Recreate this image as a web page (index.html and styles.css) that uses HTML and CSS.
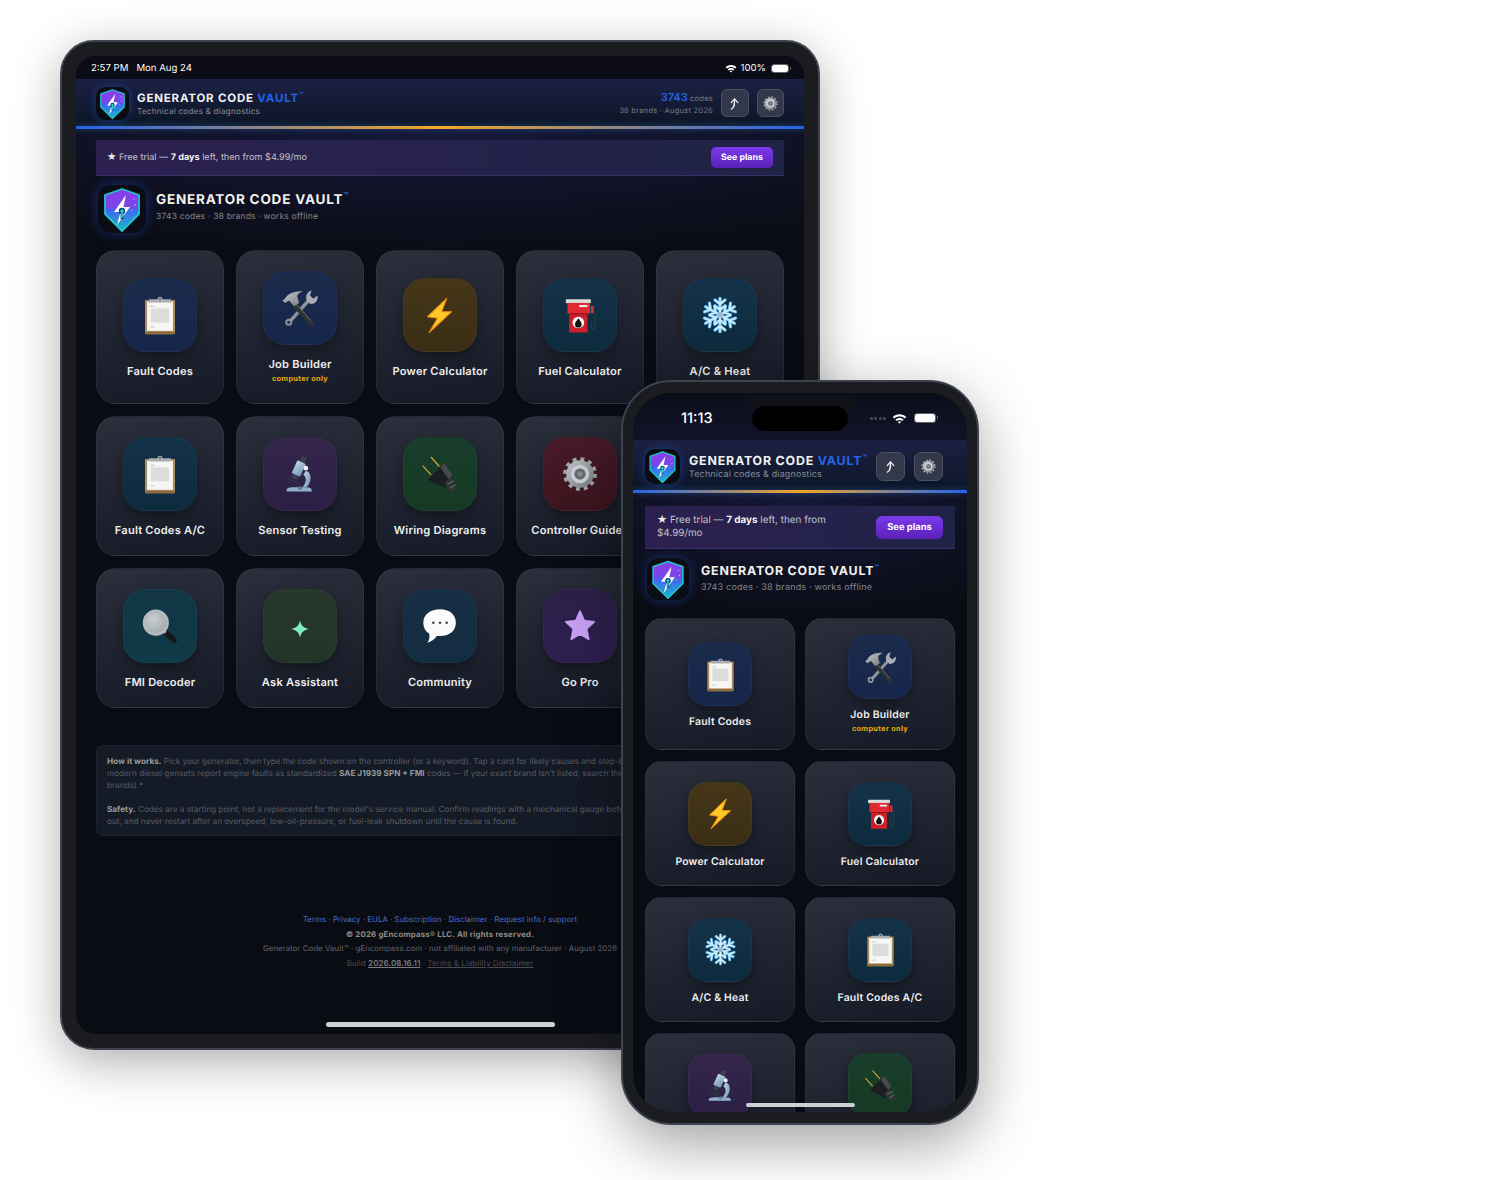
FILE: index.html
```html
<!DOCTYPE html>
<html lang="en">
<head>
    <meta charset="UTF-8">
    <title>Generator Code Vault</title>
    <link rel="stylesheet" href="styles.css">
</head>
<body>

    <!-- shared icons -->
    <svg class="sprite" width="0" height="0">
        <defs>
            <linearGradient id="shieldFill" x1="0" y1="0" x2="0" y2="1">
                <stop offset="0" stop-color="#8b3fe8"/>
                <stop offset="0.42" stop-color="#7a45ea"/>
                <stop offset="0.52" stop-color="#3a6cf0"/>
                <stop offset="1" stop-color="#1fb6c4"/>
            </linearGradient>
            <linearGradient id="metal" x1="0" y1="0" x2="1" y2="1">
                <stop offset="0" stop-color="#c6cace"/>
                <stop offset="1" stop-color="#74787e"/>
            </linearGradient>
            <linearGradient id="scopeBlue" x1="0" y1="0" x2="1" y2="1">
                <stop offset="0" stop-color="#c3d7e6"/>
                <stop offset="1" stop-color="#6f97b5"/>
            </linearGradient>
            <radialGradient id="lensFill" cx="0.4" cy="0.35" r="0.8">
                <stop offset="0" stop-color="#c9cfd2"/>
                <stop offset="1" stop-color="#98a2a7"/>
            </radialGradient>
        </defs>

        <symbol id="logo" viewBox="0 0 48 48">
            <path d="M24 4 41 10V29L24 46 7 29V10Z" fill="url(#shieldFill)" stroke="#20c4cf" stroke-width="1.8" stroke-linejoin="round"/>
            <path d="M28 10 16 27H22.500L19 40 32 22H25.500Z" fill="#fff"/>
            <circle cx="24" cy="26" r="3.2" fill="#0b3d78"/>
            <rect x="22.600" y="27" width="2.800" height="7" fill="#0b3d78"/>
            <circle cx="24" cy="26" r="1.700" fill="#22d3c8"/>
            <rect x="23.200" y="27" width="1.600" height="6" fill="#22d3c8"/>
            <circle cx="36" cy="14" r="0.800" fill="#b99cf5"/>
            <circle cx="37" cy="20" r="0.800" fill="#a4c6f8"/>
            <circle cx="34" cy="25" r="0.700" fill="#a4c6f8"/>
        </symbol>

        <symbol id="clipboard" viewBox="0 0 48 48">
            <rect x="6" y="6" width="36" height="41" rx="1.500" fill="#b48d5c"/>
            <rect x="6" y="44" width="36" height="3" rx="1" fill="#8f6c40"/>
            <rect x="8.500" y="8" width="31" height="35" fill="#f6f6f4"/>
            <rect x="12" y="13" width="6" height="1" fill="#bdbdbd"/>
            <rect x="13" y="16" width="22" height="17" fill="#dcdcdc"/>
            <rect x="12" y="38" width="6" height="1" fill="#c4c4c4"/>
            <path d="M11 5H21A3 3 0 0 1 27 5H37V9H11Z" fill="#a9adb3"/>
            <circle cx="24" cy="4.400" r="1.200" fill="#4a5260"/>
        </symbol>

        <symbol id="tools" viewBox="0 0 48 48">
            <path d="M12 40 36 13" stroke="#8f949b" stroke-width="4"/>
            <circle cx="10.500" cy="41" r="4.200" fill="#8f949b"/>
            <circle cx="10.500" cy="41" r="1.800" fill="#1c2b4b"/>
            <path d="M32 15C30 9 33 4 38 3L36 9 40 13 45 9C46 15 42 20 36 19Z" fill="#a8adb4"/>
            <path d="M15 18 38 43" stroke="#2e3136" stroke-width="5.500" stroke-linecap="round"/>
            <path d="M20 20 37 39" stroke="#6d7076" stroke-width="1.200"/>
            <path d="M3 15 6 13C8 8 16 3 27 4 22 6 20 9 21 11L23 18 17 22 11 15 6 18Z" fill="url(#metal)"/>
        </symbol>

        <symbol id="bolt" viewBox="0 0 48 48">
            <path d="M32 4 9 26 21 28 11 45 38 20 26 20Z" fill="#ffc926" stroke="#f08c12" stroke-width="1.300" stroke-linejoin="round"/>
        </symbol>

        <symbol id="fuel" viewBox="0 0 48 48">
            <path d="M38 19C41 20 42 22 42 26V38C42 42 38 42 38 38V32" fill="none" stroke="#2c3a44" stroke-width="1.400"/>
            <rect x="37" y="13" width="3.500" height="9" rx="1" fill="#c93535"/>
            <rect x="7" y="5" width="30" height="5" rx="1" fill="#dcdcdc"/>
            <rect x="9" y="9.500" width="27" height="13" fill="#e02a33"/>
            <rect x="23" y="12" width="10" height="2.500" fill="#e9e9e9"/>
            <rect x="11" y="22" width="22" height="23" fill="#cc1f29"/>
            <rect x="11" y="22" width="22" height="1.200" fill="#8d1118"/>
            <circle cx="22" cy="33" r="7" fill="#f5f5f5"/>
            <path d="M22 28C24 31 26 33 26 35A4 4 0 0 1 18 35C18 33 20 31 22 28Z" fill="#111"/>
        </symbol>

        <symbol id="snow" viewBox="0 0 48 48">
            <g fill="none" stroke="#5fb1e6" stroke-width="4" stroke-linecap="round">
                <path id="arm1" d="M24 24V4M24 11 18 6M24 11 30 6M24 18 18 13M24 18 30 13"/>
                <use href="#arm1" transform="rotate(60 24 24)"/>
                <use href="#arm1" transform="rotate(120 24 24)"/>
                <use href="#arm1" transform="rotate(180 24 24)"/>
                <use href="#arm1" transform="rotate(240 24 24)"/>
                <use href="#arm1" transform="rotate(300 24 24)"/>
            </g>
            <g fill="none" stroke="#cdeefc" stroke-width="2" stroke-linecap="round">
                <path id="arm2" d="M24 24V4M24 11 18 6M24 11 30 6M24 18 18 13M24 18 30 13"/>
                <use href="#arm2" transform="rotate(60 24 24)"/>
                <use href="#arm2" transform="rotate(120 24 24)"/>
                <use href="#arm2" transform="rotate(180 24 24)"/>
                <use href="#arm2" transform="rotate(240 24 24)"/>
                <use href="#arm2" transform="rotate(300 24 24)"/>
            </g>
            <circle cx="24" cy="24" r="3.500" fill="#9db8c9"/>
        </symbol>

        <symbol id="scope" viewBox="0 0 48 48">
            <path d="M8 45H38V43C38 41 35 40 30 40H16C11 40 8 41 8 43Z" fill="#8fb0c8"/>
            <path d="M31 20C39 22 38 34 32 40H27C31 35 33 29 28 25Z" fill="url(#scopeBlue)"/>
            <rect x="17" y="9" width="11" height="17" rx="1.500" transform="rotate(25 22.500 17.500)" fill="url(#scopeBlue)"/>
            <rect x="25" y="3" width="6" height="7" transform="rotate(25 28 6.500)" fill="#39414b"/>
            <rect x="14.500" y="25" width="7" height="5" transform="rotate(25 18 27.500)" fill="#39414b"/>
            <path d="M8 29 24 36" stroke="#2f3640" stroke-width="2"/>
            <path d="M8 33 22 39" stroke="#2f3640" stroke-width="1.400"/>
            <circle cx="31" cy="17" r="2.800" fill="#eef3f6"/>
            <circle cx="24" cy="41" r="2.200" fill="#5f7f98"/>
        </symbol>

        <symbol id="plug" viewBox="0 0 48 48">
            <path d="M3.200 14 13.200 25M13.200 3.600 23.200 15" stroke="#cfa92c" stroke-width="1.500"/>
            <path d="M9.200 30.800 29.200 10.800 39 24.800 31 40.800Z" fill="#1c1d20"/>
            <path d="M29.200 10.800 39 24.800 35 31 24 16Z" fill="#46494e"/>
            <path d="M36 28 44.400 42 38 46 29 36Z" fill="#303236"/>
            <path d="M33 36 41 32M36 41 43 37" stroke="#7b7e82" stroke-width="1.100"/>
        </symbol>

        <symbol id="gear" viewBox="0 0 48 48">
            <circle cx="24" cy="24" r="18" fill="none" stroke="#a3a6aa" stroke-width="4.500" stroke-dasharray="4.700 4.720"/>
            <circle cx="24" cy="24" r="16.500" fill="url(#metal)"/>
            <circle cx="24" cy="24" r="9" fill="none" stroke="#cfd2d6" stroke-width="4"/>
            <circle cx="24" cy="24" r="6.500" fill="#66696e"/>
            <circle cx="24" cy="24" r="3.200" fill="#8b8e93"/>
        </symbol>

        <symbol id="lens" viewBox="0 0 48 48">
            <path d="M30 31 41 41" stroke="#17181a" stroke-width="6.500" stroke-linecap="round"/>
            <path d="M27 28 31 32" stroke="#9aa0a5" stroke-width="3.500"/>
            <circle cx="19" cy="20" r="14" fill="url(#lensFill)" stroke="#b4bac0" stroke-width="3.400"/>
        </symbol>

        <symbol id="bubble" viewBox="0 0 48 48">
            <path d="M24 4C35 4 43 10 43 20 43 30 35 36 24 36L20 36C18 40 13 43 9 44 11 41 12 37 11 33 6 30 4 25 4 20 4 10 13 4 24 4Z" fill="#fbfbfb"/>
            <circle cx="16" cy="20" r="1.500" fill="#3c4047"/>
            <circle cx="24" cy="20" r="1.500" fill="#3c4047"/>
            <circle cx="32" cy="20" r="1.500" fill="#3c4047"/>
        </symbol>

        <symbol id="spark" viewBox="0 0 48 48">
            <path d="M24 17C25 23 28 26 34.500 27.500 28 29 25 32 24 38 23 32 20 29 13.500 27.500 20 26 23 23 24 17Z" fill="#7fecc6"/>
        </symbol>

        <symbol id="star" viewBox="0 0 48 48">
            <path d="M24 6 29 17.500 41 19 32 27.500 34.500 40 24 33.500 13.500 40 16 27.500 7 19 19 17.500Z" fill="#c9a0f5" stroke="#c9a0f5" stroke-width="2" stroke-linejoin="round"/>
        </symbol>

        <symbol id="wifi" viewBox="0 0 20 14">
            <path d="M1 5C6 0 14 0 19 5L17 7C13 3.500 7 3.500 3 7Z" fill="#fff"/>
            <path d="M4.500 8.500C7.500 5.500 12.500 5.500 15.500 8.500L13.700 10.300C11.700 8.500 8.300 8.500 6.300 10.300Z" fill="#fff"/>
            <path d="M7.800 11.500C9 10.500 11 10.500 12.200 11.500L10 13.800Z" fill="#fff"/>
        </symbol>

        <symbol id="arrow" viewBox="0 0 16 16">
            <path d="M4.500 14C8 13 8 9 8 4" fill="none" stroke="#eef0f4" stroke-width="1.400" stroke-linecap="round"/>
            <path d="M4.500 7 8 3 11.500 7" fill="none" stroke="#eef0f4" stroke-width="1.400" stroke-linecap="round" stroke-linejoin="round"/>
        </symbol>
    </svg>

    <!-- tablet -->
    <div class="device tablet">
        <div class="screen">
            <div class="status-bar">
                <span class="clock">2:57 PM</span>
                <span class="date">Mon Aug 24</span>
                <span class="status-right">
                    <svg class="wifi"><use href="#wifi"/></svg>
                    <span>100%</span>
                    <span class="battery"></span>
                </span>
            </div>

            <header class="app-header">
                <div class="app-logo"><svg><use href="#logo"/></svg></div>
                <div class="app-title">
                    <div class="brand">GENERATOR CODE <span class="vault">VAULT</span><sup>™</sup></div>
                    <div class="tagline">Technical codes &amp; diagnostics</div>
                </div>
                <div class="code-count">
                    <div><span class="count-num">3743</span> codes</div>
                    <div>38 brands · August 2026</div>
                </div>
                <div class="head-btn"><svg><use href="#arrow"/></svg></div>
                <div class="head-btn"><svg class="btn-gear"><use href="#gear"/></svg></div>
            </header>
            <div class="rainbow"></div>

            <main class="content">
                <div class="trial">
                    <p><span class="star-glyph">★</span> Free trial — <strong>7 days</strong> left, then from $4.99/mo</p>
                    <a class="plans">See plans</a>
                </div>

                <div class="hero">
                    <div class="hero-logo"><svg><use href="#logo"/></svg></div>
                    <div class="hero-text">
                        <h1>GENERATOR CODE VAULT<sup>™</sup></h1>
                        <p>3743 codes · 38 brands · works offline</p>
                    </div>
                </div>

                <div class="cards">
                    <div class="card"><div class="tile navy"><svg><use href="#clipboard"/></svg></div><b>Fault Codes</b></div>
                    <div class="card"><div class="tile navy"><svg><use href="#tools"/></svg></div><b>Job Builder</b><small>computer only</small></div>
                    <div class="card"><div class="tile amber"><svg><use href="#bolt"/></svg></div><b>Power Calculator</b></div>
                    <div class="card"><div class="tile teal"><svg><use href="#fuel"/></svg></div><b>Fuel Calculator</b></div>
                    <div class="card"><div class="tile teal"><svg><use href="#snow"/></svg></div><b>A/C &amp; Heat</b></div>

                    <div class="card row-start"><div class="tile teal"><svg><use href="#clipboard"/></svg></div><b>Fault Codes A/C</b></div>
                    <div class="card"><div class="tile violet"><svg><use href="#scope"/></svg></div><b>Sensor Testing</b></div>
                    <div class="card"><div class="tile green"><svg><use href="#plug"/></svg></div><b>Wiring Diagrams</b></div>
                    <div class="card"><div class="tile wine"><svg><use href="#gear"/></svg></div><b>Controller Guides</b></div>

                    <div class="card row-start"><div class="tile sea"><svg><use href="#lens"/></svg></div><b>FMI Decoder</b></div>
                    <div class="card"><div class="tile moss"><svg><use href="#spark"/></svg></div><b>Ask Assistant</b></div>
                    <div class="card"><div class="tile ocean"><svg><use href="#bubble"/></svg></div><b>Community</b></div>
                    <div class="card"><div class="tile plum"><svg><use href="#star"/></svg></div><b>Go Pro</b></div>
                </div>

                <div class="info">
                    <p><strong>How it works.</strong> Pick your generator, then type the code shown on the controller (or a keyword). Tap a card for likely causes and step-by-step fixes. Most<br>modern diesel gensets report engine faults as standardized <strong>SAE J1939 SPN + FMI</strong> codes — if your exact brand isn't listed, search the code under similar<br>brands).*</p>
                    <p><strong>Safety.</strong> Codes are a starting point, not a replacement for the model's service manual. Confirm readings with a mechanical gauge before ruling a fault<br>out, and never restart after an overspeed, low-oil-pressure, or fuel-leak shutdown until the cause is found.</p>
                </div>

                <footer class="legal">
                    <div class="legal-links"><a>Terms</a> · <a>Privacy</a> · <a>EULA</a> · <a>Subscription</a> · <a>Disclaimer</a> · <a>Request info / support</a></div>
                    <div class="legal-copy">© 2026 gEncompass® LLC. All rights reserved.</div>
                    <div>Generator Code Vault™ · gEncompass.com · not affiliated with any manufacturer · August 2026</div>
                    <div class="legal-build">Build <u class="build-no">2026.08.16.11</u> · <u>Terms &amp; Liability Disclaimer</u></div>
                </footer>
            </main>
            <div class="home-bar"></div>
        </div>
    </div>

    <!-- phone -->
    <div class="device phone">
        <div class="screen">
            <div class="speaker"></div>
            <div class="island"></div>
            <div class="status-bar">
                <span class="clock">11:13</span>
                <span class="status-right">
                    <span class="signal"><i></i><i></i><i></i><i></i></span>
                    <svg class="wifi"><use href="#wifi"/></svg>
                    <span class="battery"></span>
                </span>
            </div>

            <header class="app-header">
                <div class="app-logo"><svg><use href="#logo"/></svg></div>
                <div class="app-title">
                    <div class="brand">GENERATOR CODE <span class="vault">VAULT</span><sup>™</sup></div>
                    <div class="tagline">Technical codes &amp; diagnostics</div>
                </div>
                <div class="head-btn"><svg><use href="#arrow"/></svg></div>
                <div class="head-btn"><svg class="btn-gear"><use href="#gear"/></svg></div>
            </header>
            <div class="rainbow"></div>

            <main class="content">
                <div class="trial">
                    <p><span class="star-glyph">★</span> Free trial — <strong>7 days</strong> left, then from<br>$4.99/mo</p>
                    <a class="plans">See plans</a>
                </div>

                <div class="hero">
                    <div class="hero-logo"><svg><use href="#logo"/></svg></div>
                    <div class="hero-text">
                        <h1>GENERATOR CODE VAULT<sup>™</sup></h1>
                        <p>3743 codes · 38 brands · works offline</p>
                    </div>
                </div>

                <div class="cards">
                    <div class="card"><div class="tile navy"><svg><use href="#clipboard"/></svg></div><b>Fault Codes</b></div>
                    <div class="card"><div class="tile navy"><svg><use href="#tools"/></svg></div><b>Job Builder</b><small>computer only</small></div>
                    <div class="card"><div class="tile amber"><svg><use href="#bolt"/></svg></div><b>Power Calculator</b></div>
                    <div class="card"><div class="tile teal"><svg><use href="#fuel"/></svg></div><b>Fuel Calculator</b></div>
                    <div class="card"><div class="tile teal"><svg><use href="#snow"/></svg></div><b>A/C &amp; Heat</b></div>
                    <div class="card"><div class="tile teal"><svg><use href="#clipboard"/></svg></div><b>Fault Codes A/C</b></div>
                    <div class="card cut"><div class="tile violet"><svg><use href="#scope"/></svg></div></div>
                    <div class="card cut"><div class="tile green"><svg><use href="#plug"/></svg></div></div>
                </div>
            </main>
            <div class="home-bar"></div>
        </div>
    </div>

</body>
</html>
```

FILE: styles.css
```css
* {
    margin: 0;
    padding: 0;
    box-sizing: border-box;
}

body {
    width: 1500px;
    height: 1180px;
    position: relative;
    overflow: hidden;
    background: #fff;
    font-family: 'Inter', 'DejaVu Sans', sans-serif;
    color: #fff;
    text-rendering: geometricPrecision;
}

.sprite {
    position: absolute;
}

svg {
    display: block;
}

/* device frames sit on a free canvas */
.device {
    position: absolute;
    background: #1b1c20;
    border: 2px solid #3d4350;
}

.tablet {
    left: 60px;
    top: 40px;
    width: 760px;
    height: 1010px;
    padding: 14px;
    border-radius: 34px;
    box-shadow: 0 12px 48px rgba(0, 0, 0, 0.32);
}

.phone {
    left: 621px;
    top: 380px;
    width: 358px;
    height: 745px;
    padding: 11px 10px;
    border-radius: 50px;
    box-shadow: 0 18px 60px rgba(0, 0, 0, 0.38);
}

.screen {
    position: relative;
    height: 100%;
    overflow: hidden;
    background: #0a0c14;
}

.tablet .screen {
    border-radius: 20px;
}

.phone .screen {
    border-radius: 38px;
}

/* status bar */
.status-bar {
    display: flex;
    align-items: center;
    background: #0b0c15;
}

.tablet .status-bar {
    height: 23px;
    padding: 1px 16px 0 15px;
    gap: 8px;
    font-size: 9.6px;
}

.phone .status-bar {
    height: 47px;
    padding: 3px 32px 0 48px;
    background: linear-gradient(#0c0d1a, #111428);
}

.phone .clock {
    font-size: 14.5px;
    font-weight: 500;
}

.status-right {
    margin-left: auto;
    display: flex;
    align-items: center;
    gap: 4px;
}

.wifi {
    width: 12px;
    height: 9px;
}

.phone .wifi {
    width: 15px;
    height: 11px;
}

.battery {
    position: relative;
    display: block;
    width: 16px;
    height: 7px;
    margin-left: 2px;
    border-radius: 2.500px;
    background: #fff;
    box-shadow: 0 0 0 1px #62646a;
}

.battery::after {
    content: "";
    position: absolute;
    right: -3px;
    top: 2px;
    width: 1.500px;
    height: 3px;
    background: #62646a;
}

.phone .battery {
    width: 20px;
    height: 8px;
    margin-left: 4px;
}

.signal {
    display: flex;
    gap: 1.500px;
    margin-right: 2px;
}

.signal i {
    width: 3px;
    height: 3px;
    border-radius: 50%;
    background: #4d4f55;
}

.speaker {
    position: absolute;
    left: 113px;
    top: 3px;
    width: 109px;
    height: 12px;
    border-radius: 6px;
    background: #101119;
}

.island {
    position: absolute;
    left: 119px;
    top: 13px;
    width: 96px;
    height: 25px;
    border-radius: 13px;
    background: #000;
}

/* header */
.app-header {
    display: flex;
    align-items: center;
    background: linear-gradient(#1c2144, #0c1526);
}

.tablet .app-header {
    height: 47px;
    padding: 1px 20px 0;
}

.phone .app-header {
    height: 50px;
    padding: 2px 24px 0 12px;
}

.app-logo {
    flex: none;
    background: #0a0c14;
    box-shadow: 0 0 8px rgba(37, 99, 235, 0.45);
}

.tablet .app-logo {
    width: 33px;
    height: 33px;
    border-radius: 9px;
}

.phone .app-logo {
    width: 35px;
    height: 35px;
    border-radius: 10px;
}

.app-logo svg {
    width: 100%;
    height: 100%;
}

.app-title {
    margin-left: 8px;
    flex: 1;
}

.tablet .app-title {
    padding-top: 1px;
}

.phone .app-title {
    margin-left: 9px;
    padding-top: 3px;
}

.brand {
    font-weight: 700;
    letter-spacing: 0.8px;
    color: #f1f1f1;
    line-height: 14px;
}

.tablet .brand {
    font-size: 11.5px;
}

.phone .brand {
    font-size: 12.4px;
}

.vault {
    color: #2563eb;
}

.brand sup, h1 sup {
    font-size: 0.6em;
    line-height: 0;
    vertical-align: 0.7em;
    letter-spacing: 0;
    color: #2563eb;
}

.tagline {
    font-size: 8.2px;
    color: #8b8c95;
    letter-spacing: 0.2px;
    line-height: 12px;
}

.phone .tagline {
    font-size: 8.9px;
    line-height: 14px;
}

.code-count {
    text-align: right;
    font-size: 7.6px;
    color: #77797f;
    letter-spacing: 0.2px;
    line-height: 12px;
    margin-right: 8px;
    padding-top: 1px;
}

.count-num {
    font-size: 11px;
    font-weight: 600;
    color: #2563eb;
    letter-spacing: 0;
}

.head-btn {
    flex: none;
    display: flex;
    align-items: center;
    justify-content: center;
    width: 27.500px;
    height: 27.500px;
    border-radius: 6px;
    background: #33384a;
    border: 1px solid #4b5060;
}

.tablet .head-btn + .head-btn {
    margin-left: 8px;
}

.phone .head-btn {
    width: 29px;
    height: 29px;
    border-radius: 7px;
    margin-left: 9px;
}

.head-btn svg {
    width: 15px;
    height: 15px;
}

.head-btn .btn-gear {
    width: 17px;
    height: 17px;
}

.rainbow {
    height: 3px;
    background: linear-gradient(90deg, #2563eb, #f5a623 50%, #2563eb);
    box-shadow: 0 0 6px rgba(56, 140, 220, 0.5);
    position: relative;
}

/* scrolling area */
.content {
    background: radial-gradient(ellipse 90% 130px at 50% 0, #16183a, rgba(10, 12, 20, 0));
}

.tablet .content {
    padding: 11px 20px 0;
}

.phone .content {
    padding: 13px 12px 0;
}

.trial {
    display: flex;
    align-items: center;
    justify-content: space-between;
    background: linear-gradient(90deg, #2c2050, #1f2346);
    border-bottom: 1px solid #3a2f68;
    color: #c3c3cc;
}

.tablet .trial {
    height: 36px;
    padding: 0 11px;
    font-size: 9.1px;
}

.phone .trial {
    height: 43px;
    padding: 0 12px;
    font-size: 9.9px;
    line-height: 13px;
}

.trial strong {
    color: #f4f4f4;
}

.star-glyph {
    color: #eee;
    font-family: 'DejaVu Sans', sans-serif;
    font-size: 1.15em;
    line-height: 1;
}

.plans {
    flex: none;
    font-weight: 700;
    color: #fff;
    background: linear-gradient(#7c3aed, #5b21b6);
    border-radius: 5px;
    text-align: center;
}

.tablet .plans {
    width: 62px;
    height: 21px;
    line-height: 21px;
    font-size: 8.8px;
}

.phone .plans {
    width: 67px;
    height: 23px;
    line-height: 23px;
    font-size: 9.4px;
    border-radius: 6px;
}

.hero {
    display: flex;
    align-items: center;
}

.tablet .hero {
    margin: 9px 0 17px 2px;
    gap: 10px;
}

.phone .hero {
    margin: 9px 0 18px 2px;
    gap: 12px;
}

.hero-text {
    padding-bottom: 1px;
}

.hero-logo {
    flex: none;
    background: #0b0d16;
    box-shadow: 0 0 12px rgba(37, 99, 235, 0.4);
}

.tablet .hero-logo {
    width: 48px;
    height: 48px;
    border-radius: 13px;
}

.phone .hero-logo {
    width: 42px;
    height: 42px;
    border-radius: 12px;
}

.hero-logo svg {
    width: 100%;
    height: 100%;
}

h1 {
    font-weight: 700;
    letter-spacing: 0.8px;
    color: #f2f0ec;
}

.tablet h1 {
    font-size: 13.5px;
    line-height: 17px;
}

.phone h1 {
    font-size: 12.4px;
    line-height: 18px;
}

.hero p {
    color: #85868c;
    letter-spacing: 0.2px;
}

.tablet .hero p {
    font-size: 8.5px;
    line-height: 17px;
}

.phone .hero p {
    font-size: 9px;
    line-height: 16px;
}

/* launcher cards */
.cards {
    display: grid;
}

.tablet .cards {
    grid-template-columns: repeat(5, 1fr);
    gap: 12px;
}

.phone .cards {
    grid-template-columns: repeat(2, 1fr);
    gap: 11px 10px;
}

.row-start {
    grid-column: 1;
}

.card {
    display: flex;
    flex-direction: column;
    align-items: center;
    justify-content: center;
    white-space: nowrap;
    background: linear-gradient(170deg, #2b2f3b, #151a27);
    border: 1px solid rgba(255, 255, 255, 0.05);
}

.tablet .card {
    padding: 20px 0 18px;
    border-radius: 20px;
}

.phone .card {
    min-height: 125px;
    padding: 16px 0 13px;
    border-radius: 17px;
}

.phone .card.cut {
    justify-content: flex-start;
    padding-top: 19px;
}

.tile {
    display: flex;
    align-items: center;
    justify-content: center;
    box-shadow: 0 6px 14px rgba(0, 0, 0, 0.3);
    border: 1px solid rgba(255, 255, 255, 0.03);
}

.tablet .tile {
    width: 74px;
    height: 74px;
    border-radius: 22px;
}

.phone .tile {
    width: 64px;
    height: 64px;
    border-radius: 19px;
}

.tablet .tile svg {
    width: 40px;
    height: 40px;
}

.phone .tile svg {
    width: 35px;
    height: 35px;
}

.navy { background: linear-gradient(#1b2b4c, #14264a); }
.amber { background: linear-gradient(#453618, #3b2e14); }
.teal { background: linear-gradient(#14334a, #0c2b3d); }
.violet { background: linear-gradient(#34254c, #2b1f45); }
.green { background: linear-gradient(#183e2b, #153924); }
.wine { background: linear-gradient(#481a28, #3d151f); }
.sea { background: linear-gradient(#123646, #0f3a48); }
.moss { background: linear-gradient(#27382b, #233528); }
.ocean { background: linear-gradient(#172f45, #132c42); }
.plum { background: linear-gradient(#2c2048, #2e1f52); }

.card b {
    font-weight: 600;
    color: #efefef;
    letter-spacing: 0.22px;
}

.tablet .card b {
    margin-top: 12px;
    font-size: 11.1px;
    line-height: 14px;
}

.phone .card b {
    margin-top: 9px;
    font-size: 10.4px;
    line-height: 14px;
}

.card small {
    font-size: 7.4px;
    font-weight: 700;
    color: #e8a90c;
    letter-spacing: 0.3px;
}

.tablet .card small {
    margin-top: 2px;
    line-height: 12px;
}

.phone .card small {
    line-height: 14px;
}

/* how it works */
.info {
    margin-top: 37px;
    padding: 9px 10px;
    height: 91px;
    background: #141a26;
    border: 1px solid #1c2230;
    border-radius: 7px;
    font-size: 8.2px;
    line-height: 12px;
    color: #5a5d65;
    white-space: nowrap;
    overflow: hidden;
}

.info p + p {
    margin-top: 12px;
}

.info strong {
    color: #9a9a9a;
}

.legal {
    margin-top: 76px;
    text-align: center;
    font-size: 7.8px;
    line-height: 14.500px;
    color: #62666e;
    letter-spacing: 0.07px;
}

.legal-links a {
    color: #4f6fc4;
}

.legal-links {
    font-size: 7.75px;
}

.legal-copy {
    font-weight: 700;
    color: #8f8c85;
    letter-spacing: 0.22px;
}

.legal-build {
    color: #4a4d54;
    font-size: 8px;
}

.build-no {
    color: #7a7d83;
    font-weight: 600;
}

.home-bar {
    position: absolute;
    background: #cfd0d4;
    border-radius: 3px;
}

.tablet .home-bar {
    left: 250px;
    bottom: 7px;
    width: 229px;
    height: 5px;
}

.phone .home-bar {
    left: 113px;
    bottom: 5px;
    width: 109px;
    height: 4px;
}
```
